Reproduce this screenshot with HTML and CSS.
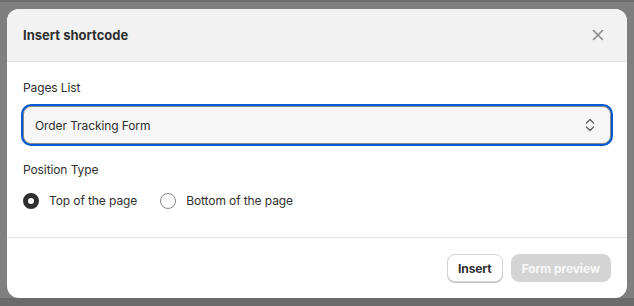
FILE: index.html
```html
<!DOCTYPE html>
<html lang="en">
<head>
    <meta charset="UTF-8">
    <title>Insert shortcode</title>
    <link rel="stylesheet" href="styles.css">
</head>
<body>
    <div class="modal">
        <div class="modal-header">
            <h2>Insert shortcode</h2>
            <button class="close-btn" aria-label="Close">
                <svg width="20" height="20" viewBox="0 0 20 20"><path d="M5.5 5.5l9 9M14.5 5.5l-9 9" stroke="#8a8a8a" stroke-width="1.6" stroke-linecap="round" fill="none"/></svg>
            </button>
        </div>

        <div class="modal-body">
            <label class="field-label">Pages List</label>
            <div class="select">
                <span>Order Tracking Form</span>
                <svg width="12" height="16" viewBox="0 0 12 16"><path d="M2.5 6L6 2.5 9.5 6M2.5 10L6 13.5 9.5 10" stroke="#616161" stroke-width="1.4" stroke-linecap="round" stroke-linejoin="round" fill="none"/></svg>
            </div>

            <div class="field-label position-label">Position Type</div>
            <div class="radio-row">
                <label class="radio-item"><span class="radio checked"></span>Top of the page</label>
                <label class="radio-item"><span class="radio"></span>Bottom of the page</label>
            </div>
        </div>

        <div class="modal-footer">
            <button class="button">Insert</button>
            <button class="button disabled">Form preview</button>
        </div>
    </div>
</body>
</html>
```

FILE: styles.css
```css
body {
    margin: 0;
    padding: 9px 7px 8px 7px;
    background: linear-gradient(to bottom, #6d6d6d 0, #6d6d6d 2px, #7f7f7f 2px, #7f7f7f 298px, #6b6b6b 298px);
    font-family: Inter, "Noto Sans", sans-serif;
    color: #303030;
    font-size: 12px;
    letter-spacing: -0.1px;
    height: 289px;
}

.modal {
    width: 620px;
    height: 289px;
    background: #fff;
    border-radius: 12px;
    overflow: hidden;
    display: flex;
    flex-direction: column;
}

.modal-header {
    height: 52px;
    background: #f2f2f2;
    border-bottom: 1px solid #e3e3e3;
    display: flex;
    align-items: center;
    justify-content: space-between;
    padding: 0 15px 0 16px;
}

.modal-header h2 {
    margin: 0;
    font-size: 13px;
    font-weight: 650;
    letter-spacing: 0;
    color: #303030;
}

.close-btn {
    width: 28px;
    height: 28px;
    border: none;
    background: none;
    padding: 0;
    display: flex;
    align-items: center;
    justify-content: center;
}

.modal-body {
    padding: 16px 16px 26px 16px;
    display: flex;
    flex-direction: column;
}

.field-label {
    line-height: 20px;
    color: #303030;
}

.select {
    margin-top: 8px;
    height: 36px;
    border: 1px solid #8a8a8a;
    border-radius: 8px;
    background: #f6f6f6;
    box-shadow: 0 0 0 2px #005bd3;
    display: flex;
    align-items: center;
    justify-content: space-between;
    padding: 0 14px 0 11px;
}

.position-label {
    margin-top: 16px;
}

.radio-row {
    margin-top: 11px;
    display: flex;
    gap: 23px;
}

.radio-item {
    display: flex;
    align-items: center;
    gap: 10px;
    line-height: 20px;
}

.radio {
    width: 14px;
    height: 14px;
    border: 1px solid #8a8a8a;
    border-radius: 50%;
    background: #fff;
}

.radio.checked {
    width: 6px;
    height: 6px;
    border: 5px solid #303030;
}

.modal-footer {
    border-top: 1px solid #e3e3e3;
    padding: 16px;
    display: flex;
    justify-content: flex-end;
    gap: 8px;
}

.button {
    height: 28px;
    padding: 0 10px;
    border-radius: 8px;
    border: 1px solid #d4d4d4;
    box-shadow: 0 1px 0 #c4c4c4;
    background: #fff;
    font-family: Inter, "Noto Sans", sans-serif;
    font-size: 12px;
    font-weight: 650;
    letter-spacing: -0.1px;
    color: #303030;
}

.button.disabled {
    background: #d4d4d4;
    border-color: #d4d4d4;
    box-shadow: none;
    color: #f7f7f7;
    padding: 0 10px;
}
```
